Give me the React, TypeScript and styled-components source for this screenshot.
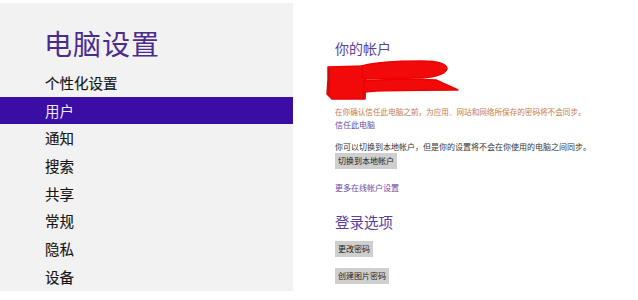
import React from "react";
import styled, { createGlobalStyle } from "styled-components";

const Global = createGlobalStyle`
  html, body { margin: 0; padding: 0; background: #ffffff; }
  body { font-family: "Noto Sans CJK SC", "Noto Sans", sans-serif; }
`;

const Page = styled.div`
  width: 638px;
  height: 300px;
  display: flex;
  align-items: flex-start;
  padding-top: 3px;
  box-sizing: border-box;
  overflow: hidden;
  background: #ffffff;
`;

const Sidebar = styled.nav`
  width: 293px;
  height: 288px;
  background: #f2f2f2;
  overflow: hidden;
  flex-shrink: 0;
`;

const Title = styled.h1`
  margin: 0;
  padding: 23px 0 0 44px;
  font-size: 28px;
  line-height: 34px;
  font-weight: 400;
  color: #4b2c8c;
  letter-spacing: 1px;
`;

const Menu = styled.ul`
  list-style: none;
  margin: 9px 0 0 0;
  padding: 0;
`;

const MenuItem = styled.li<{ $active?: boolean }>`
  height: 27.7px;
  line-height: 27.7px;
  padding-left: 45px;
  font-size: 14.5px;
  font-weight: 400;
  color: ${(p) => (p.$active ? "#efe8ff" : "#151515")};
  background: ${(p) => (p.$active ? "#3a0ea4" : "transparent")};
  -webkit-text-stroke: ${(p) => (p.$active ? "0" : "0.15px #151515")};
`;

const Content = styled.main`
  display: flex;
  flex-direction: column;
  align-items: flex-start;
  padding: 36px 0 0 42px;
`;

const SectionHeading = styled.h2<{ $size: number; $gap?: number }>`
  margin: ${(p) => p.$gap ?? 0}px 0 0 0;
  font-size: ${(p) => p.$size}px;
  line-height: 18px;
  font-weight: 400;
  color: #5a3f9c;
`;

const Scribble = styled.svg`
  display: block;
  margin: 3px 0 0 -9px;
`;

const Small = styled.p<{ $color: string; $gap: number; $size?: number }>`
  margin: ${(p) => p.$gap}px 0 0 0;
  font-size: ${(p) => p.$size ?? 8}px;
  line-height: 11px;
  color: ${(p) => p.$color};
  white-space: nowrap;
`;

const Button = styled.button<{ $gap: number }>`
  margin: ${(p) => p.$gap}px 0 0 0;
  border: none;
  background: #cfcfcf;
  color: #1c1c1c;
  font-family: inherit;
  font-size: 8px;
  line-height: 16px;
  padding: 0 3px;
  height: 16px;
`;

const menuItems = ["个性化设置", "用户", "通知", "搜索", "共享", "常规", "隐私", "设备"];

export default function App() {
  return (
    <>
      <Global />
      <Page>
        <Sidebar>
          <Title>电脑设置</Title>
          <Menu>
            {menuItems.map((m) => (
              <MenuItem key={m} $active={m === "用户"}>
                {m}
              </MenuItem>
            ))}
          </Menu>
        </Sidebar>
        <Content>
          <SectionHeading $size={14}>你的帐户</SectionHeading>
          <Scribble width="134" height="40" viewBox="0 0 134 40">
            <g fill="#f20a0a" stroke="#ee0000" strokeWidth="1.5" strokeLinejoin="round">
              <path d="M2 7 L38 6 L42 12 L40 20 L39 39 L6 39 L1 34 L2 20 Z" />
              <path d="M36 6 C50 2 70 1 95 1 C110 1 121 3 121 9 C119 15 105 18 90 18 L42 19 L36 17 Z" />
              <path d="M38 21 C60 19 90 19 110 20 L132 30 C110 30 80 30 50 31 L38 32 Z" />
            </g>
            <path d="M3 9 L3 35" stroke="#6a1a1a" strokeWidth="1" opacity="0.6" />
            <path d="M37 39 L37 31" stroke="#6a1a1a" strokeWidth="1" opacity="0.5" />
          </Scribble>
          <Small $color="#c77a4a" $gap={6} $size={7.6}>
            在你确认信任此电脑之前，为应用、网站和网络所保存的密码将不会同步。
          </Small>
          <Small $color="#6a4aa8" $gap={2}>
            信任此电脑
          </Small>
          <Small $color="#333333" $gap={11}>
            你可以切换到本地帐户，但是你的设置将不会在你使用的电脑之间同步。
          </Small>
          <Button $gap={1}>切换到本地帐户</Button>
          <Small $color="#6a4aa8" $gap={13}>
            更多在线帐户设置
          </Small>
          <SectionHeading $size={14.5} $gap={20}>
            登录选项
          </SectionHeading>
          <Button $gap={10}>更改密码</Button>
          <Button $gap={11}>创建图片密码</Button>
        </Content>
      </Page>
    </>
  );
}
